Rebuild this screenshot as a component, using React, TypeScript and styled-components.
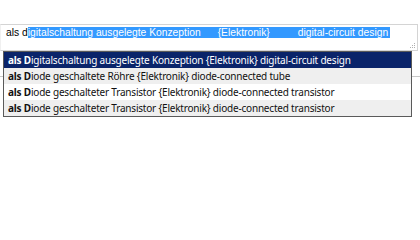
import React from "react";
import styled, { createGlobalStyle } from "styled-components";

const Global = createGlobalStyle`
  html, body { margin: 0; padding: 0; background: #fff; }
  body { width: 420px; height: 238px; overflow: hidden; }
`;

const Page = styled.div`
  position: relative;
  padding-top: 24px;
  width: 420px;
  height: 238px;
  box-sizing: border-box;
`;

const Field = styled.div`
  position: relative;
  box-sizing: border-box;
  margin: 0 2px 0 0;
  height: 27px;
  border: 1px solid #d4d4d4;
  border-left-color: #f0f0f0;
  font-family: "Liberation Sans", Arial, sans-serif;
  font-size: 10.3px;
  color: #000;
  padding: 2px 0 0 5px;
  white-space: nowrap;
  line-height: 11px;
`;

const Sel = styled.span`
  background: #3399ff;
  color: #fff;
  display: inline-block;
  padding: 0 2px 0 0;
`;

const Gap = styled.span<{ $w: number }>`
  display: inline-block;
  width: ${(p) => p.$w}px;
`;

const Grip = styled.svg`
  position: absolute;
  right: 1px;
  bottom: 1px;
`;

const Rule = styled.div`
  margin-top: 25px;
  height: 1px;
  background: #c8c8c8;
`;

const Menu = styled.ul`
  position: absolute;
  left: 3px;
  top: 51px;
  width: 409px;
  margin: 0;
  padding: 0;
  list-style: none;
  box-sizing: border-box;
  border: 1px solid #5a5a5a;
  background: #fff;
  font-family: "Noto Sans", "Open Sans", sans-serif;
  font-size: 10px;
  letter-spacing: -0.2px;
`;

const Row = styled.li<{ $active?: boolean; $shade?: boolean }>`
  height: 16px;
  line-height: 16px;
  padding-left: 4px;
  white-space: nowrap;
  overflow: hidden;
  color: ${(p) => (p.$active ? "#fff" : "#111")};
  background: ${(p) => (p.$active ? "#0a246a" : p.$shade ? "#efefef" : "#fff")};
  b { font-weight: 700; }
`;

const items = [
  { rest: "igitalschaltung ausgelegte Konzeption {Elektronik} digital-circuit design" },
  { rest: "iode geschaltete Röhre {Elektronik} diode-connected tube" },
  { rest: "iode geschalteter Transistor {Elektronik} diode-connected transistor" },
  { rest: "iode geschalteter Transistor {Elektronik} diode-connected transistor" },
];

export default function App() {
  return (
    <>
      <Global />
      <Page>
        <Field>
          als d
          <Sel>
            igitalschaltung ausgelegte Konzeption
            <Gap $w={17} />
            {"{Elektronik}"}
            <Gap $w={28} />
            digital-circuit design
          </Sel>
          <Grip width="6" height="6" viewBox="0 0 6 6">
            <rect x="4" y="0" width="1" height="1" fill="#b0b0b0" />
            <rect x="2" y="2" width="1" height="1" fill="#b0b0b0" />
            <rect x="4" y="2" width="1" height="1" fill="#b0b0b0" />
            <rect x="0" y="4" width="1" height="1" fill="#b0b0b0" />
            <rect x="2" y="4" width="1" height="1" fill="#b0b0b0" />
            <rect x="4" y="4" width="1" height="1" fill="#b0b0b0" />
          </Grip>
        </Field>
        <Rule />
        <Menu>
          {items.map((it, i) => (
            <Row key={i} $active={i === 0} $shade={i % 2 === 1}>
              <b>als D</b>
              {it.rest}
            </Row>
          ))}
        </Menu>
      </Page>
    </>
  );
}
